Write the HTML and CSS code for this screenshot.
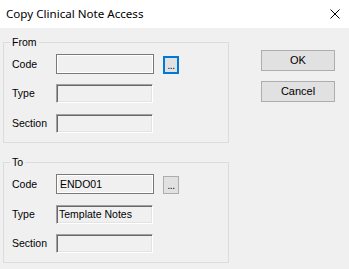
FILE: index.html
```html
<!DOCTYPE html>
<html>
<head>
<meta charset="utf-8">
<link rel="stylesheet" href="styles.css">
</head>
<body>
<div class="dialog">
  <div class="titlebar">
    <span class="title">Copy Clinical Note Access</span>
    <svg class="close" width="10" height="10" viewBox="0 0 10 10"><path d="M0.5 0.5 L9.5 9.5 M9.5 0.5 L0.5 9.5" stroke="#000" stroke-width="1" fill="none"/></svg>
  </div>
  <div class="main">
    <div class="groups">
      <div class="group">
        <span class="legend">From</span>
        <div class="row">
          <span class="label">Code</span>
          <div class="field code"></div>
          <div class="dots focused">...</div>
        </div>
        <div class="row">
          <span class="label">Type</span>
          <div class="field sunken"></div>
        </div>
        <div class="row gap1">
          <span class="label">Section</span>
          <div class="field sunken"></div>
        </div>
      </div>
      <div class="group second">
        <span class="legend">To</span>
        <div class="row">
          <span class="label">Code</span>
          <div class="field code">ENDO01</div>
          <div class="dots">...</div>
        </div>
        <div class="row gap1">
          <span class="label">Type</span>
          <div class="field sunken">Template Notes</div>
        </div>
        <div class="row">
          <span class="label">Section</span>
          <div class="field sunken"></div>
        </div>
      </div>
    </div>
    <div class="buttons">
      <div class="btn">OK</div>
      <div class="btn">Cancel</div>
    </div>
  </div>
</div>
</body>
</html>
```
FILE: styles.css
```css
html, body {
  margin: 0;
  padding: 0;
}
body {
  width: 349px;
  height: 269px;
  background: #f0f0f0;
  font-family: "Liberation Sans", Arial, sans-serif;
  font-size: 10.5px;
  color: #000;
  overflow: hidden;
}
.dialog {
  width: 349px;
  height: 269px;
  background: #f0f0f0;
}
.titlebar {
  height: 28px;
  background: #fff;
  display: flex;
  align-items: center;
  justify-content: space-between;
  padding: 0 9px 0 6px;
  box-sizing: border-box;
}
.title {
  font-family: "Noto Sans", "Open Sans", sans-serif;
  font-size: 11.6px;
  color: #000;
  margin-top: -2px;
}
.close {
  display: block;
  margin-top: -1px;
}
.main {
  display: flex;
  align-items: flex-start;
}
.groups {
  display: flex;
  flex-direction: column;
  padding-left: 3px;
  padding-top: 14px;
  gap: 19px;
}
.group {
  position: relative;
  width: 226px;
  height: 101px;
  box-sizing: border-box;
  border: 1px solid #dcdcdc;
  padding: 11px 0 0 8px;
  display: flex;
  flex-direction: column;
  gap: 9px;
}
.legend {
  position: absolute;
  left: 6px;
  top: -8px;
  padding: 0 2px;
  background: #f0f0f0;
  line-height: 14px;
}
.row {
  display: flex;
  align-items: center;
  height: 20px;
}
.row.gap1 {
  margin-top: 1px;
}
.label {
  width: 44px;
}
.field {
  width: 97px;
  height: 19px;
  box-sizing: border-box;
  background: #f0f0f0;
  padding: 1px 0 0 2px;
  line-height: 15px;
  white-space: nowrap;
  overflow: hidden;
}
.field.code {
  width: 98px;
  height: 20px;
  border: 1px solid #7a7a7a;
  box-shadow: inset 0 0 0 1px #fff;
  padding: 2px 0 0 3px;
}
.field.sunken {
  border-top: 1px solid #a0a0a0;
  border-left: 1px solid #a0a0a0;
  border-right: 1px solid #fff;
  border-bottom: 1px solid #fff;
  box-shadow: inset 1px 1px 0 #696969, inset -1px -1px 0 #e3e3e3;
  padding: 1px 0 0 2px;
}
.dots {
  width: 16px;
  height: 18px;
  box-sizing: border-box;
  margin-left: 9px;
  margin-top: 1px;
  border: 1px solid #adadad;
  background: #e1e1e1;
  font-size: 10px;
  line-height: 18px;
  text-align: center;
  letter-spacing: -0.5px;
}
.dots.focused {
  border: 2px solid #0078d7;
  line-height: 16px;
}
.buttons {
  margin-left: 32px;
  margin-top: 22px;
  display: flex;
  flex-direction: column;
  gap: 10px;
}
.btn {
  width: 74px;
  height: 21px;
  box-sizing: border-box;
  border: 1px solid #adadad;
  background: #e1e1e1;
  text-align: center;
  line-height: 19px;
  font-size: 11px;
}
```
